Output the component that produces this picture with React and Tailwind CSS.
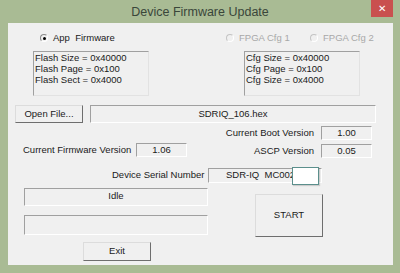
import React from "react";

const sunken = "border border-[#a0a0a0] border-b-white border-r-white";
const raised = "border border-[#dcdcdc] border-b-[#6e6e6e] border-r-[#6e6e6e] bg-[#f0f0f0]";

const Radio = ({ label, checked, disabled }) => (
    <div className={`flex items-center gap-[5px] ${disabled ? "text-[#a8a8a8]" : "text-[#1a1a1a]"}`}>
        <span
            className={`flex h-[8px] w-[8px] items-center justify-center rounded-full border ${
                disabled ? "border-[#c4c4c4] border-b-white border-r-white" : "border-[#8a8a8a] border-b-white border-r-white"
            } bg-[#f0f0f0]`}
        >
            {checked && <span className="h-[3px] w-[3px] rounded-full bg-black" />}
        </span>
        <span className="whitespace-pre">{label}</span>
    </div>
);

const InfoBox = ({ lines, className }) => (
    <div className={`h-[45px] w-[116px] border border-[#a0a0a0] border-b-[#e2e2e2] border-r-[#e2e2e2] pl-[1px] leading-[11px] ${className}`}>
        {lines.map((l) => (
            <div key={l}>{l}</div>
        ))}
    </div>
);

const ValueBox = ({ value }) => (
    <div className={`flex h-[14px] w-[51px] items-center justify-center ${sunken}`}>{value}</div>
);

export default function App() {
    return (
        <div className="h-[273px] w-[400px] bg-[#a9bb94] font-['Liberation_Sans',Arial,sans-serif] text-[9.5px] text-[#1a1a1a]">
            {/* title bar */}
            <div className="relative h-[23px]">
                <div className="text-center text-[12.5px] leading-[24px] text-[#3a463a]">Device Firmware Update</div>
                <div className="absolute right-[7px] top-0 flex h-[17px] w-[22px] items-center justify-center bg-[#c9504f] text-[10px] text-white">
                    ✕
                </div>
            </div>

            <div className="ml-[8px] h-[242px] w-[385px] bg-[#f0f0f0] pt-[9px]">
                {/* radios */}
                <div className="flex h-[12px] items-center">
                    <div className="w-[218px] pl-[32px]">
                        <Radio label="App  Firmware" checked />
                    </div>
                    <div className="w-[84px]">
                        <Radio label="FPGA Cfg 1" disabled />
                    </div>
                    <Radio label="FPGA Cfg 2" disabled />
                </div>

                {/* info boxes */}
                <div className="mt-[7px] flex">
                    <InfoBox className="ml-[25px]" lines={["Flash Size = 0x40000", "Flash Page = 0x100", "Flash Sect = 0x4000"]} />
                    <InfoBox className="ml-[95px] w-[114px]" lines={["Cfg Size = 0x40000", "Cfg Page = 0x100", "Cfg Size = 0x4000"]} />
                </div>

                {/* open file */}
                <div className="mt-[9px] flex">
                    <button className={`ml-[7px] h-[18px] w-[68px] ${raised}`}>Open File...</button>
                    <div className={`ml-[7px] flex h-[18px] w-[286px] items-center justify-center ${sunken}`}>SDRIQ_106.hex</div>
                </div>

                {/* versions */}
                <div className="mt-[3px] flex items-end">
                    <div className="mb-[1px] flex items-center">
                        <span className="ml-[15px] w-[113px]">Current Firmware Version</span>
                        <ValueBox value="1.06" />
                    </div>
                    <div className="ml-auto mr-[21px] flex flex-col gap-[4px]">
                        <div className="flex items-center justify-end gap-[7px]">
                            <span>Current Boot Version</span>
                            <ValueBox value="1.00" />
                        </div>
                        <div className="flex items-center justify-end gap-[7px]">
                            <span>ASCP Version</span>
                            <ValueBox value="0.05" />
                        </div>
                    </div>
                </div>

                {/* serial */}
                <div className="mt-[9px] flex items-center">
                    <span className="w-[200px] pl-[104px]">Device Serial Number</span>
                    <div className={`relative flex h-[15px] w-[114px] items-center overflow-visible pl-[17px] ${sunken}`}>
                        <span className="whitespace-pre">SDR-IQ  MC002(</span>
                        <div className="absolute left-[83px] top-[-2px] h-[18px] w-[27px] border border-[#5b8f8c] bg-white shadow-[1px_1px_1px_rgba(0,0,0,0.15)]" />
                    </div>
                </div>

                {/* status + buttons */}
                <div className="mt-[5px] flex">
                    <div className="ml-[16px] flex w-[184px] flex-col">
                        <div className={`flex h-[18px] items-center justify-center ${sunken}`}>Idle</div>
                        <div className={`mt-[9px] h-[20px] ${sunken}`} />
                        <button className={`ml-[59px] mt-[7px] h-[19px] w-[68px] ${raised}`}>Exit</button>
                    </div>
                    <button className={`ml-[47px] mt-[6px] h-[43px] w-[68px] ${raised}`}>START</button>
                </div>
            </div>
        </div>
    );
}
